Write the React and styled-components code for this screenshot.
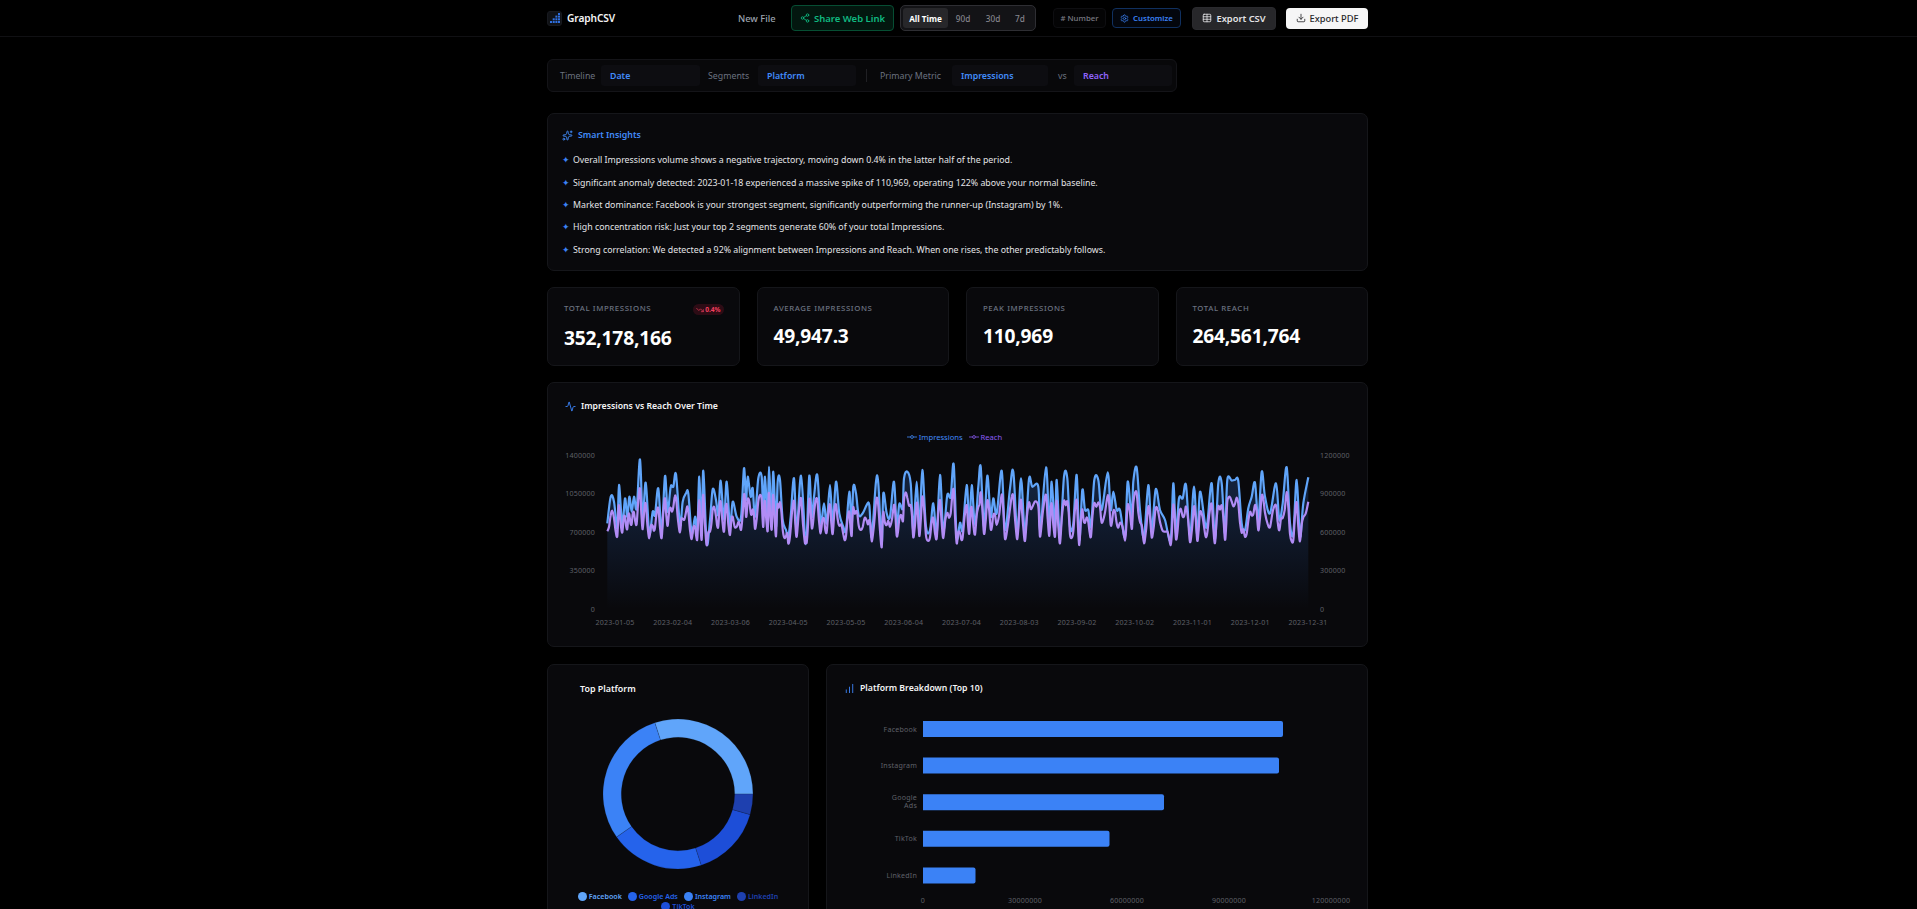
import React from "react"
import styled, { createGlobalStyle } from "styled-components"
import {
  Share2,
  Table,
  Download,
  Settings,
  Sparkles,
  Activity,
  TrendingDown,
  ChartNoAxesColumnIncreasing,
} from "lucide-react"

const FONT = `"Noto Sans", "Open Sans", sans-serif`

const GlobalStyle = createGlobalStyle`
  html, body {
    margin: 0;
    background: #000;
    color: #fff;
    font-family: ${FONT};
    overflow: hidden;
  }
  * { box-sizing: border-box; }
`

// traced series, [x, y] in chart px
const RAW = [202,280,212,200,222,215,232,295,237,165,247,285,255,205,262,260,268,200,275,245,282,200,290,235,300,88,308,265,317,158,328,310,338,245,345,255,355,175,365,305,375,138,383,245,392,170,400,170,408,133,420,285,428,215,438,190,445,190,455,310,465,260,472,300,478,140,485,310,490,122,500,340,510,270,518,178,528,210,535,255,542,152,552,270,560,155,570,290,578,215,590,260,603,262,612,115,618,210,623,140,632,200,638,175,645,260,655,145,665,140,670,260,675,140,683,270,687,110,695,270,700,125,708,290,713,155,720,150,728,270,738,300,745,320,752,260,762,145,770,300,783,137,795,320,800,320,808,137,815,260,822,200,832,135,842,280,852,220,860,280,870,165,878,280,888,155,898,250,910,290,918,300,928,185,935,290,940,170,948,190,956,255,968,250,980,225,988,225,995,320,1008,155,1015,160,1025,340,1030,190,1040,250,1050,260,1062,155,1070,290,1078,222,1088,235,1092,145,1102,125,1112,160,1120,300,1130,155,1138,300,1147,120,1158,290,1170,300,1180,220,1190,310,1200,135,1210,300,1222,195,1232,200,1241,103,1250,320,1260,278,1268,300,1280,165,1288,290,1295,165,1305,285,1315,170,1322,110,1332,290,1342,137,1352,260,1360,205,1370,250,1385,122,1395,300,1410,175,1420,125,1432,310,1443,145,1455,310,1467,147,1477,170,1495,170,1501,300,1518,112,1528,290,1535,155,1545,300,1550,150,1560,320,1572,140,1582,145,1590,290,1600,280,1610,135,1618,330,1627,180,1635,240,1645,240,1653,290,1663,150,1675,150,1685,240,1703,127,1712,240,1720,185,1730,240,1740,240,1755,320,1763,155,1775,260,1780,155,1790,113,1800,240,1812,320,1825,165,1835,300,1847,178,1860,240,1875,270,1892,330,1900,160,1908,310,1917,205,1928,205,1938,165,1950,320,1962,170,1972,320,1980,185,1995,280,2002,280,2015,160,2025,330,2035,160,2045,160,2055,310,2062,150,2075,152,2085,150,2095,153,2105,280,2115,300,2125,235,2135,200,2145,158,2155,270,2165,125,2175,200,2190,250,2208,160,2218,270,2228,220,2240,112,2250,280,2260,310,2270,150,2280,320,2290,220,2305,142]

const impressions = []
const reach = []
for (let i = 0; i < RAW.length; i += 2) {
  const x = 540 + RAW[i] / 3 - 565
  impressions.push([x, 430 + RAW[i + 1] / 3 - 442])
  const y = 430 + (0.7 * RAW[i + 1] + 108 + ((i * 7) % 5) * 2) / 3 - 442
  reach.push([x, y])
  if (i + 2 < RAW.length) {
    const nx = 540 + RAW[i + 2] / 3 - 565
    const ny = 430 + (0.7 * RAW[i + 3] + 108) / 3 - 442
    reach.push([(x + nx) / 2, (y + ny) / 2 + (i % 4 === 0 ? 5 : -5)])
  }
}

const smoothPath = (pts) => {
  let d = `M${pts[0][0].toFixed(1)} ${pts[0][1].toFixed(1)}`
  for (let i = 0; i < pts.length - 1; i++) {
    const p0 = pts[i - 1] || pts[i]
    const p1 = pts[i]
    const p2 = pts[i + 1]
    const p3 = pts[i + 2] || p2
    const c1x = p1[0] + (p2[0] - p0[0]) / 6
    const c1y = p1[1] + (p2[1] - p0[1]) / 6
    const c2x = p2[0] - (p3[0] - p1[0]) / 6
    const c2y = p2[1] - (p3[1] - p1[1]) / 6
    d += `C${c1x.toFixed(1)} ${c1y.toFixed(1)} ${c2x.toFixed(1)} ${c2y.toFixed(1)} ${p2[0].toFixed(1)} ${p2[1].toFixed(1)}`
  }
  return d
}

const PLOT = { left: 42, right: 743, top: 13, bottom: 167 }

const leftTicks = ["1400000", "1050000", "700000", "350000", "0"]
const rightTicks = ["1200000", "900000", "600000", "300000", "0"]
const dates = [
  "2023-01-05", "2023-02-04", "2023-03-06", "2023-04-05", "2023-05-05", "2023-06-04",
  "2023-07-04", "2023-08-03", "2023-09-02", "2023-10-02", "2023-11-01", "2023-12-01", "2023-12-31",
]

const LineChart = () => {
  const blue = smoothPath(impressions)
  const last = impressions[impressions.length - 1]
  const area = `${blue}L${last[0]} ${PLOT.bottom}L${impressions[0][0]} ${PLOT.bottom}Z`
  const step = (PLOT.bottom - PLOT.top) / 4
  return (
    <ChartSvg width="786" height="194" viewBox="0 0 786 194">
      <defs>
        <linearGradient id="areaFill" x1="0" y1="50" x2="0" y2="167" gradientUnits="userSpaceOnUse">
          <stop offset="0" stopColor="#3b82f6" stopOpacity="0.2" />
          <stop offset="1" stopColor="#3b82f6" stopOpacity="0" />
        </linearGradient>
      </defs>
      <path d={area} fill="url(#areaFill)" />
      <path d={blue} fill="none" stroke="#60a5fa" strokeWidth="2.2" strokeLinejoin="round" />
      <path d={smoothPath(reach)} fill="none" stroke="#b18cf5" strokeWidth="2.2" strokeLinejoin="round" />
      {leftTicks.map((t, i) => (
        <AxisText key={t} x="30" y={PLOT.top + step * i + 2.5} textAnchor="end">{t}</AxisText>
      ))}
      {rightTicks.map((t, i) => (
        <AxisText key={t} x="755" y={PLOT.top + step * i + 2.5}>{t}</AxisText>
      ))}
      {dates.map((d, i) => (
        <AxisText key={d} x={50 + i * 57.75} y="183" textAnchor="middle">{d}</AxisText>
      ))}
    </ChartSvg>
  )
}

const DONUT = [
  { name: "Facebook", from: -18, to: 90, color: "#60a5fa" },
  { name: "LinkedIn", from: 90, to: 106, color: "#1e40af" },
  { name: "TikTok", from: 106, to: 162, color: "#1d4ed8" },
  { name: "Google Ads", from: 162, to: 235, color: "#2563eb" },
  { name: "Instagram", from: 235, to: 342, color: "#3b82f6" },
]
const LEGEND = ["Facebook", "Google Ads", "Instagram", "LinkedIn", "TikTok"]

const polar = (r, deg) => {
  const a = ((deg - 90) * Math.PI) / 180
  return `${(80 + r * Math.cos(a)).toFixed(2)} ${(80 + r * Math.sin(a)).toFixed(2)}`
}

const arc = (from, to, R = 75, r = 56.7) => {
  const big = to - from > 180 ? 1 : 0
  return `M${polar(R, from)}A${R} ${R} 0 ${big} 1 ${polar(R, to)}L${polar(r, to)}A${r} ${r} 0 ${big} 0 ${polar(r, from)}Z`
}

const Donut = () => (
  <DonutSvg width="160" height="160" viewBox="0 0 160 160">
    {DONUT.map((s) => (
      <path key={s.name} d={arc(s.from, s.to)} fill={s.color} stroke="#0a0a0d" strokeOpacity="0.4" strokeWidth="0.4" />
    ))}
  </DonutSvg>
)

const BARS = [
  { name: ["Facebook"], value: 360 },
  { name: ["Instagram"], value: 356 },
  { name: ["Google", "Ads"], value: 241 },
  { name: ["TikTok"], value: 186.5 },
  { name: ["LinkedIn"], value: 52.5 },
]
const BAR_TICKS = ["0", "30000000", "60000000", "90000000", "120000000"]

const BarChart = () => (
  <BarSvg width="522" height="200" viewBox="0 0 522 200">
    {BARS.map((b, i) => {
      const y = 6 + i * 36.6
      return (
        <g key={b.name[0]}>
          <path d={`M80 ${y}h${b.value - 2}q2 0 2 2v12q0 2 -2 2h-${b.value - 2}z`} fill="#3b82f6" />
          {b.name.map((line, j) => (
            <AxisText
              key={line}
              x="74"
              y={y + (b.name.length > 1 ? 6 + j * 7.6 : 10.5)}
              textAnchor="end"
            >
              {line}
            </AxisText>
          ))}
        </g>
      )
    })}
    {BAR_TICKS.map((t, i) => (
      <AxisText key={t} x={80 + i * 102} y="187.5" textAnchor="middle">{t}</AxisText>
    ))}
  </BarSvg>
)

const LogoMark = () => (
  <LogoBox>
    <svg width="10" height="10" viewBox="0 0 10 10">
      <g fill="#2f6fe0">
        <rect x="0" y="8" width="2" height="2" />
        <rect x="2.7" y="8" width="2" height="2" />
        <rect x="5.4" y="8" width="2" height="2" />
        <rect x="8" y="8" width="2" height="2" />
        <rect x="2.7" y="5.3" width="2" height="2" />
        <rect x="5.4" y="5.3" width="2" height="2" />
        <rect x="8" y="5.3" width="2" height="2" />
        <rect x="5.4" y="2.6" width="2" height="2" />
        <rect x="8" y="2.6" width="2" height="2" />
        <rect x="8" y="0" width="2" height="2" />
      </g>
    </svg>
  </LogoBox>
)

const INSIGHTS = [
  "Overall Impressions volume shows a negative trajectory, moving down 0.4% in the latter half of the period.",
  "Significant anomaly detected: 2023-01-18 experienced a massive spike of 110,969, operating 122% above your normal baseline.",
  "Market dominance: Facebook is your strongest segment, significantly outperforming the runner-up (Instagram) by 1%.",
  "High concentration risk: Just your top 2 segments generate 60% of your total Impressions.",
  "Strong correlation: We detected a 92% alignment between Impressions and Reach. When one rises, the other predictably follows.",
]

const STATS = [
  { label: "Total Impressions", value: "352,178,166", trend: "0.4%" },
  { label: "Average Impressions", value: "49,947.3" },
  { label: "Peak Impressions", value: "110,969" },
  { label: "Total Reach", value: "264,561,764" },
]

const App = () => (
  <>
    <GlobalStyle />
    <Header>
      <HeaderInner>
        <Brand>
          <LogoMark />
          GraphCSV
        </Brand>
        <Actions>
          <NewFile>New File</NewFile>
          <ShareButton>
            <Share2 size={10} />
            Share Web Link
          </ShareButton>
          <RangeGroup>
            <RangeButton $active $w={45}>All Time</RangeButton>
            <RangeButton $w={30}>90d</RangeButton>
            <RangeButton $w={30}>30d</RangeButton>
            <RangeButton $w={24}>7d</RangeButton>
          </RangeGroup>
          <FormatButton>
            # Number
          </FormatButton>
          <CustomizeButton>
            <Settings size={9} />
            Customize
          </CustomizeButton>
          <CsvButton>
            <Table size={10} />
            Export CSV
          </CsvButton>
          <PdfButton>
            <Download size={10} />
            Export PDF
          </PdfButton>
        </Actions>
      </HeaderInner>
    </Header>

    <Main>
      <FilterBar>
        <FilterLabel $w={36}>Timeline</FilterLabel>
        <FilterSelect $w={99}>Date</FilterSelect>
        <FilterLabel $w={43} $ml={8}>Segments</FilterLabel>
        <FilterSelect $w={98} $ml={7}>Platform</FilterSelect>
        <FilterDivider />
        <FilterLabel $w={63}>Primary Metric</FilterLabel>
        <FilterSelect $w={96} $ml={9}>Impressions</FilterSelect>
        <FilterLabel $w={8} $ml={10}>vs</FilterLabel>
        <FilterSelect $w={98} $ml={8} $purple>Reach</FilterSelect>
      </FilterBar>

      <InsightsCard>
        <InsightsTitle>
          <Sparkles size={11} />
          Smart Insights
        </InsightsTitle>
        <InsightList>
          {INSIGHTS.map((text) => (
            <InsightItem key={text}>
              <Bullet>✦</Bullet>
              {text}
            </InsightItem>
          ))}
        </InsightList>
      </InsightsCard>

      <StatGrid>
        {STATS.map((s) => (
          <StatCard key={s.label}>
            <StatHead>
              <StatLabel>{s.label}</StatLabel>
              {s.trend && (
                <TrendBadge>
                  <TrendingDown size={8} />
                  {s.trend}
                </TrendBadge>
              )}
            </StatHead>
            <StatValue>{s.value}</StatValue>
          </StatCard>
        ))}
      </StatGrid>

      <ChartCard>
        <CardTitle>
          <Activity size={11} color="#3b82f6" />
          Impressions vs Reach Over Time
        </CardTitle>
        <ChartLegend>
          <LegendKey $color="#418bfa">
            <LegendLine viewBox="0 0 10 6" width="10" height="6" />
            Impressions
          </LegendKey>
          <LegendKey $color="#8b5cf6">
            <LegendLine viewBox="0 0 10 6" width="10" height="6" />
            Reach
          </LegendKey>
        </ChartLegend>
        <LineChart />
      </ChartCard>

      <BottomRow>
        <DonutCard>
          <DonutTitle>Top Platform</DonutTitle>
          <Donut />
          <DonutLegend>
            {LEGEND.map((name) => {
              const color = DONUT.find((s) => s.name === name).color
              return (
                <DonutKey key={name} $color={color}>
                  <Dot $color={color} />
                  {name}
                </DonutKey>
              )
            })}
          </DonutLegend>
        </DonutCard>
        <BreakdownCard>
          <CardTitle>
            <ChartNoAxesColumnIncreasing size={11} color="#3b82f6" />
            Platform Breakdown (Top 10)
          </CardTitle>
          <BarChart />
        </BreakdownCard>
      </BottomRow>
    </Main>
  </>
)

export default App

const Header = styled.header`
  height: 37px;
  border-bottom: 1px solid #101013;
`

const HeaderInner = styled.div`
  width: 820px;
  height: 36px;
  margin-left: 548px;
  display: flex;
  align-items: center;
  justify-content: space-between;
`

const Brand = styled.div`
  display: flex;
  align-items: center;
  gap: 5px;
  margin-left: -1px;
  font-size: 10.2px;
  font-weight: 600;
  letter-spacing: -0.1px;
  color: #f4f4f5;
`

const LogoBox = styled.div`
  width: 15px;
  height: 15px;
  border-radius: 3px;
  background: #101216;
  border: 1px solid #17191f;
  display: flex;
  align-items: center;
  justify-content: center;
`

const Actions = styled.div`
  display: flex;
  align-items: center;
`

const NewFile = styled.button`
  width: 36px;
  padding: 0;
  border: 0;
  background: none;
  color: #9ca3af;
  font: 500 9.3px ${FONT};
  white-space: nowrap;
`

const BaseButton = styled.button`
  display: flex;
  align-items: center;
  justify-content: center;
  gap: 4px;
  padding: 0;
  border-radius: 4px;
  font-family: ${FONT};
  white-space: nowrap;
`

const ShareButton = styled(BaseButton)`
  width: 103px;
  height: 26px;
  margin-left: 17px;
  border: 1px solid #064e33;
  background: #03170f;
  color: #10b981;
  font-size: 9.5px;
  font-weight: 600;
`

const RangeGroup = styled.div`
  width: 136px;
  height: 26px;
  margin-left: 6px;
  padding: 2px;
  display: flex;
  border: 1px solid #2e2e33;
  border-radius: 5px;
  background: #131316;
`

const RangeButton = styled.button`
  width: ${(p) => p.$w}px;
  padding: 0;
  border: 0;
  border-radius: 3px;
  background: ${(p) => (p.$active ? "#27272a" : "transparent")};
  color: ${(p) => (p.$active ? "#fff" : "#85858d")};
  font: ${(p) => (p.$active ? 700 : 500)} 8.2px ${FONT};
  white-space: nowrap;
`

const FormatButton = styled(BaseButton)`
  width: 53px;
  height: 20px;
  margin-left: 17px;
  border: 1px solid #0e0e11;
  background: #040405;
  color: #7b7b84;
  font-size: 7.8px;
  font-weight: 500;
`

const CustomizeButton = styled(BaseButton)`
  width: 69px;
  height: 20px;
  margin-left: 6px;
  border: 1px solid #10305f;
  background: #03060d;
  color: #3b82f6;
  font-size: 7.8px;
  font-weight: 600;
`

const CsvButton = styled(BaseButton)`
  width: 84px;
  height: 23px;
  margin-left: 11px;
  border: 1px solid #2a2a2e;
  background: #27272a;
  color: #e4e4e7;
  font-size: 9.3px;
  font-weight: 600;
`

const PdfButton = styled(BaseButton)`
  width: 82px;
  height: 21px;
  margin-left: 10px;
  border: 0;
  background: #f6f6f6;
  color: #27272a;
  font-size: 9.3px;
  font-weight: 500;
`

const Main = styled.main`
  width: 821px;
  margin-left: 547px;
  padding-top: 22px;
  display: flex;
  flex-direction: column;
  gap: 16px;
`

const FilterBar = styled.div`
  width: 630px;
  height: 33px;
  margin-bottom: 5px;
  padding-left: 12px;
  display: flex;
  align-items: center;
  background: #08080a;
  border: 1px solid #141418;
  border-radius: 6px;
`

const FilterLabel = styled.span`
  width: ${(p) => p.$w}px;
  margin-left: ${(p) => p.$ml || 0}px;
  font-size: 8.8px;
  color: #6b7280;
  white-space: nowrap;
`

const FilterSelect = styled.div`
  width: ${(p) => p.$w}px;
  height: 21px;
  margin-left: ${(p) => p.$ml ?? 5}px;
  padding-left: 9px;
  display: flex;
  align-items: center;
  border-radius: 3px;
  background: #0d0d11;
  color: ${(p) => (p.$purple ? "#8f63fa" : "#418bfa")};
  font-size: 8.8px;
  font-weight: 600;
`

const FilterDivider = styled.div`
  width: 1px;
  height: 13px;
  margin: 0 13px 0 10px;
  background: #202024;
`

const Card = styled.section`
  background: #09090c;
  border: 1px solid #15161a;
  border-radius: 7px;
`

const InsightsCard = styled(Card)`
  height: 158px;
  padding: 15px 14px 0;
`

const InsightsTitle = styled.h3`
  margin: 0 0 8px;
  height: 12px;
  display: flex;
  align-items: center;
  gap: 5px;
  font-size: 8.8px;
  font-weight: 600;
  color: #418bfa;
`

const InsightList = styled.ul`
  margin: 0;
  padding: 0;
  list-style: none;
`

const InsightItem = styled.li`
  height: 22.4px;
  display: flex;
  align-items: center;
  font-size: 8.8px;
  color: #e4e4e7;
  white-space: nowrap;
`

const Bullet = styled.span`
  width: 11px;
  font: 9px "DejaVu Sans", sans-serif;
  color: #3b82f6;
`

const StatGrid = styled.div`
  display: grid;
  grid-template-columns: repeat(4, 1fr);
  gap: 17px;
`

const StatCard = styled(Card)`
  height: 79px;
  padding: 15px 16px 0;
`

const StatHead = styled.div`
  display: flex;
  align-items: flex-start;
  justify-content: space-between;
  min-height: 11px;
`

const StatLabel = styled.span`
  font-size: 7.8px;
  line-height: 11px;
  font-weight: 500;
  letter-spacing: 0.6px;
  text-transform: uppercase;
  color: #6b7280;
`

const TrendBadge = styled.span`
  display: flex;
  align-items: center;
  gap: 1px;
  height: 11px;
  margin: 1px -1px 1px 0;
  padding: 0 3px;
  border-radius: 6px;
  background: rgba(225, 29, 72, 0.17);
  color: #f43f5e;
  font-size: 6.6px;
  font-weight: 700;
`

const StatValue = styled.div`
  margin-top: 10px;
  font-size: 19.2px;
  line-height: 24px;
  font-weight: 700;
  letter-spacing: -0.2px;
  color: #fff;
`

const ChartCard = styled(Card)`
  height: 265px;
  padding: 15px 16px 0 17px;
`

const CardTitle = styled.h3`
  margin: 0;
  height: 16px;
  display: flex;
  align-items: center;
  gap: 5px;
  font-size: 8.7px;
  font-weight: 600;
  color: #f4f4f5;
`

const ChartLegend = styled.div`
  height: 10px;
  margin: 18px 7px 0 0;
  display: flex;
  justify-content: center;
  gap: 6px;
`

const LegendKey = styled.span`
  display: flex;
  align-items: center;
  gap: 2px;
  font-size: 7.6px;
  color: ${(p) => p.$color};

  svg {
    stroke: ${(p) => p.$color};
  }
`

const LegendLine = (props) => (
  <svg {...props}>
    <path d="M0 3h3.5M6.5 3h3.5" strokeWidth="0.8" />
    <circle cx="5" cy="3" r="1.4" fill="none" strokeWidth="0.8" />
  </svg>
)

const ChartSvg = styled.svg`
  display: block;
`

const AxisText = styled.text`
  font-family: ${FONT};
  font-size: 7.1px;
  letter-spacing: 0.2px;
  fill: #5f6068;
`

const BottomRow = styled.div`
  display: grid;
  grid-template-columns: 262px minmax(0, 1fr);
  gap: 17px;
  margin-top: 1px;
`

const DonutCard = styled(Card)`
  height: 420px;
  padding: 15px 16px 0;
`

const DonutTitle = styled.h3`
  margin: 0 0 0 16px;
  height: 16px;
  display: flex;
  align-items: center;
  font-size: 8.9px;
  font-weight: 600;
  color: #f4f4f5;
`

const DonutSvg = styled.svg`
  display: block;
  margin: 18px auto 0;
`

const DonutLegend = styled.div`
  margin-top: 17px;
  display: flex;
  flex-wrap: wrap;
  justify-content: center;
  gap: 0 6px;
`

const DonutKey = styled.span`
  display: flex;
  align-items: center;
  gap: 2px;
  height: 10px;
  font-size: 7.1px;
  font-weight: 600;
  color: ${(p) => p.$color};
`

const Dot = styled.i`
  width: 9px;
  height: 9px;
  border-radius: 50%;
  background: ${(p) => p.$color};
`

const BreakdownCard = styled(Card)`
  height: 420px;
  padding: 15px 0 0 17px;
`

const BarSvg = styled.svg`
  display: block;
  margin-top: 19px;
  margin-left: -1px;
`
